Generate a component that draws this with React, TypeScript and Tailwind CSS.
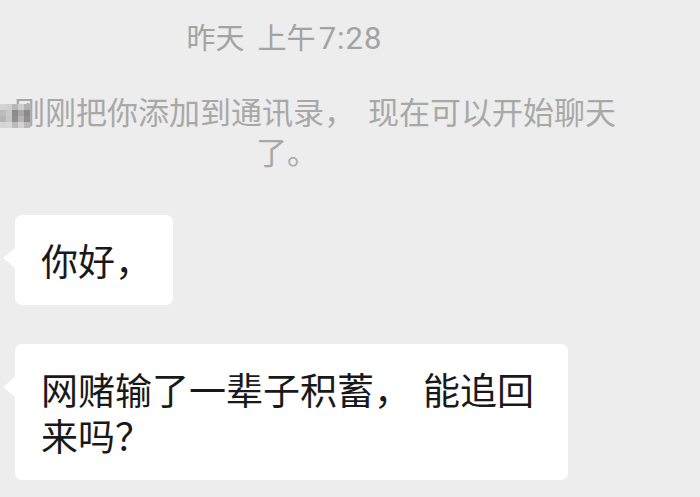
import React from "react";

// blurred contact name, 12 cols x 4 rows of 6px cells
const mosaic = [
  "#ececec", "#ebebeb", "#eaeaea", "#ebebeb", "#eaeaea", "#ebebeb", "#e6e6e6", "#d4d4d4", "#cfcfcf", "#b8b8b8", "#cdcdcd", "#b2b2b2",
  "#e8e8e8", "#e6e6e6", "#e9e9e9", "#e4e4e4", "#e8e8e8", "#e6e6e6", "#cccccc", "#bcbcbc", "#c8c8c8", "#8c8c8c", "#a8a8a8", "#8a8a8a",
  "#e9e9e9", "#e5e5e5", "#e8e8e8", "#e6e6e6", "#e7e7e7", "#e4e4e4", "#c4c4c4", "#b4b4b4", "#c6c6c6", "#909090", "#b6b6b6", "#8e8e8e",
  "#ececec", "#eaeaea", "#ebebeb", "#e9e9e9", "#ebebeb", "#eaeaea", "#e2e2e2", "#d6d6d6", "#d8d8d8", "#bcbcbc", "#d2d2d2", "#b8b8b8",
];

const Gap = ({ w }: { w: string }) => <span className={"inline-block " + w} />;

const Bubble = ({ children, wide }: { children: React.ReactNode; wide?: boolean }) => (
  <div className="relative pl-[15px]">
    {/* tail */}
    <div className="absolute left-[3px] top-[33px] h-0 w-0 border-y-[10px] border-r-[12px] border-y-transparent border-r-white" />
    <div
      className={
        "rounded-[7px] bg-white py-[22px] pl-[26px] text-[37px] leading-[46px] text-[#191919] " +
        (wide ? "w-[553px] pr-[24px]" : "w-fit pr-[21px]")
      }
    >
      {children}
    </div>
  </div>
);

export default function App() {
  return (
    <div
      className="h-[497px] w-[700px] overflow-hidden bg-[#ededed]"
      style={{ fontFamily: '"Noto Sans CJK SC", "Noto Sans", sans-serif' }}
    >
      <div className="flex w-[574px] flex-col items-center pt-[16px]">
        {/* time */}
        <div className="-ml-[5px] flex items-baseline text-[29px] leading-[40px] text-[#a3a3a3]">
          <span className="mr-[13px]">昨天</span>
          <span>上午</span>
          <span className="ml-[3px] text-[31px] tracking-[1px]" style={{ fontFamily: "Roboto, sans-serif" }}>
            7:28
          </span>
        </div>

        {/* system notice */}
        <div className="mt-[32px] w-[670px] shrink-0 text-center text-[31px] leading-[40px] text-[#a8a8a8]">
          <span className="relative -mr-[16px] inline-grid h-[24px] w-[72px] grid-cols-[repeat(12,6px)] align-middle">
            {mosaic.map((c, i) => (
              <span key={i} className="h-[6px] w-[6px]" style={{ backgroundColor: c }} />
            ))}
          </span>
          刚刚把你添加到通讯录，<Gap w="w-[13px]" />现在可以开始聊天了。
        </div>
      </div>

      {/* messages */}
      <div className="mt-[44px] flex flex-col gap-[39px]">
        <Bubble>你好，</Bubble>
        <Bubble wide>
          网赌输了一辈子积蓄，<Gap w="w-[12px]" />能追回来吗？
        </Bubble>
      </div>
    </div>
  );
}
